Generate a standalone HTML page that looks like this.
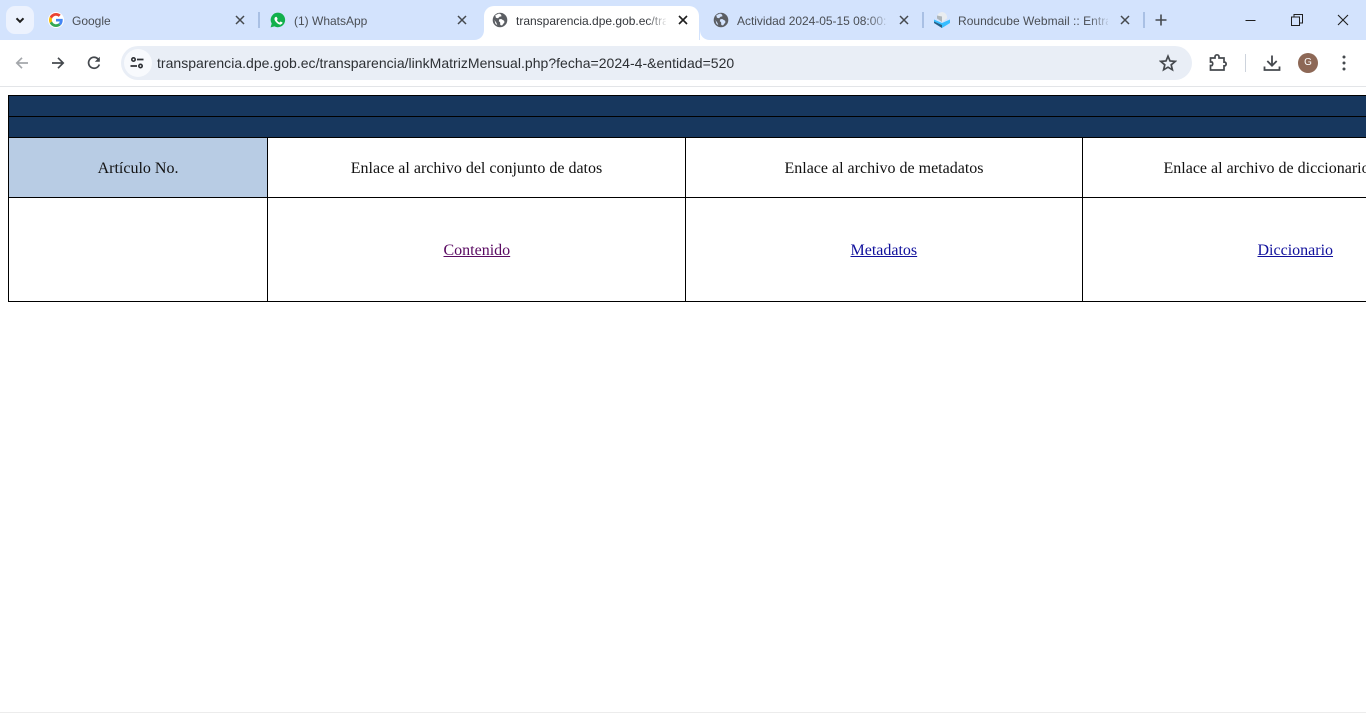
<!DOCTYPE html>
<html lang="es">
<head>
<meta charset="utf-8">
<title>transparencia.dpe.gob.ec</title>
<style>
html,body{margin:0;padding:0;width:1366px;height:713px;overflow:hidden;background:#fff}
#r{position:relative;width:1366px;height:713px;overflow:hidden}
#r div,#r svg,#r a,#r span{position:absolute}
.tt{font:12px/16px "Liberation Sans",sans-serif;color:#4a4e54;top:12.500px;white-space:nowrap;overflow:hidden;letter-spacing:0}
.x{width:10px;height:10px}
.sep{width:2px;height:16px;top:12px;background:#a9c0e4}
.ln{background:#000}
.c{font:16px/18px "Liberation Serif",serif;color:#111;text-align:center;white-space:nowrap}
.fade{width:22px;height:18px;top:11px}
</style>
</head>
<body>
<div id="r">
<div style="left:0;top:0;width:1366px;height:40px;background:#d3e3fd"></div>

<div style="left:6px;top:6px;width:28px;height:28px;border-radius:9px;background:#ecf2fe"></div>
<svg style="left:15px;top:17px" width="10" height="7" viewBox="0 0 10 7"><path d="M1.500 1.300 5 4.800 8.500 1.300" fill="none" stroke="#1f1f1f" stroke-width="2"/></svg>

<div style="left:48px;top:12px;width:16px;height:16px;border-radius:8px;background:#fff"></div>
<svg style="left:49px;top:13px" width="14" height="14" viewBox="0 0 48 48"><path fill="#EA4335" d="M24 9.500c3.500 0 6.700 1.200 9.200 3.600l6.900-6.900C35.900 2.400 30.500 0 24 0 14.600 0 6.500 5.400 2.600 13.200l8 6.200C12.400 13.700 17.700 9.500 24 9.500z"/><path fill="#4285F4" d="M47 24.500c0-1.600-.1-3.100-.4-4.500H24v9h12.900c-.6 3-2.200 5.500-4.700 7.200l7.700 6C44.400 38.400 47 32 47 24.500z"/><path fill="#FBBC05" d="M10.600 28.600c-.5-1.400-.8-3-.8-4.600s.3-3.200.8-4.600l-8-6.200C.9 16.500 0 20.100 0 24s.9 7.500 2.600 10.800l8-6.200z"/><path fill="#34A853" d="M24 48c6.500 0 11.900-2.100 15.900-5.800l-7.700-6c-2.200 1.500-4.900 2.300-8.200 2.300-6.300 0-11.600-4.200-13.400-9.900l-8 6.200C6.500 42.600 14.600 48 24 48z"/></svg>
<div class="tt" style="left:72px;width:150px">Google</div>
<svg class="x" style="left:235px;top:15px" viewBox="0 0 10 10"><path d="M1 1 9 9M9 1 1 9" stroke="#45494e" stroke-width="1.500"/></svg>
<div class="sep" style="left:258px"></div>

<svg style="left:270px;top:12px" width="16" height="16" viewBox="0 0 16 16"><path fill="#12b04c" d="M8 .6a7.300 7.300 0 0 0-6.300 11L.6 15.400l3.900-1A7.300 7.300 0 1 0 8 .6z"/><path fill="#fff" d="M5.600 4.200c-.3 0-.7.100-1 .5-.4.400-.9 1-.9 2.200s.9 2.500 1.100 2.700c.1.200 1.800 2.900 4.400 3.800 2.100.8 2.600.6 3-.1.500-.1 1.300-.6 1.400-1.100.2-.5.200-1 .1-1.100l-.4-.2-1.600-.8c-.2-.1-.4-.1-.6.100l-.7.9c-.1.200-.3.200-.5.100-.3-.1-1-.4-1.800-1.100-.7-.6-1.100-1.300-1.300-1.600-.1-.2 0-.3.100-.5l.5-.6.200-.4v-.4L6.800 5c-.2-.5-.4-.8-.6-.8z" transform="translate(1.500 1.500) scale(.8)"/></svg>
<div class="tt" style="left:294px;width:150px">(1) WhatsApp</div>
<svg class="x" style="left:457px;top:15px" viewBox="0 0 10 10"><path d="M1 1 9 9M9 1 1 9" stroke="#45494e" stroke-width="1.500"/></svg>

<svg style="left:474px;top:30px" width="236" height="10" viewBox="0 0 236 10"><path d="M0 10C6 10 10 6 10 0V10zM236 10C230 10 226 6 226 0V10z" fill="#fff"/></svg>
<div style="left:484px;top:6px;width:215px;height:34px;background:#fff;border-radius:10px 10px 0 0"></div>
<svg style="left:492px;top:12px" width="16" height="16" viewBox="0 0 16 16"><circle cx="8" cy="8" r="7.300" fill="#5b5e63"/><path fill="#fff" d="M7 1.500 3.300 3.200l.6 2.600L6 6.300l1.500-1.600 2-.5L9 2.500zM9.200 7l-1.900.3-.5 1.800 1.300 1.300.2 2.600 1.700.5 2.500-3.200-.4-1.500zM2.500 8l2 3 .8 2.200-1.900-1.500z"/></svg>
<div class="tt" style="left:516px;width:150px;color:#33363b">transparencia.dpe.gob.ec/transparencia</div>
<div class="fade" style="left:646px;background:linear-gradient(90deg,rgba(255,255,255,0),#fff)"></div>
<svg class="x" style="left:678px;top:15px" viewBox="0 0 10 10"><path d="M1 1 9 9M9 1 1 9" stroke="#1f1f1f" stroke-width="1.600"/></svg>

<svg style="left:713px;top:12px" width="16" height="16" viewBox="0 0 16 16"><circle cx="8" cy="8" r="7.300" fill="#5b5e63"/><path fill="#d3e3fd" d="M7 1.500 3.300 3.200l.6 2.600L6 6.300l1.500-1.600 2-.5L9 2.500zM9.200 7l-1.900.3-.5 1.800 1.300 1.300.2 2.600 1.700.5 2.500-3.200-.4-1.500zM2.500 8l2 3 .8 2.200-1.900-1.500z"/></svg>
<div class="tt" style="left:737px;width:150px;letter-spacing:-.03px">Actividad 2024-05-15 08:00:53</div>
<div class="fade" style="left:868px;background:linear-gradient(90deg,rgba(211,227,253,0),#d3e3fd)"></div>
<svg class="x" style="left:899px;top:15px" viewBox="0 0 10 10"><path d="M1 1 9 9M9 1 1 9" stroke="#45494e" stroke-width="1.500"/></svg>
<div class="sep" style="left:922px"></div>

<svg style="left:934px;top:12px" width="16" height="16" viewBox="0 0 16 16"><path fill="#37beff" d="M0 7.500 8 11l8-3.500V11l-8 5-8-5z"/><path fill="#2b5f85" d="M0 9.500 8 13v3l-8-5z"/><path fill="#e9edf0" d="M8 0a5.500 5.500 0 0 1 5 6.500L8 10 3 6.500A5.500 5.500 0 0 1 8 0z"/><path fill="#aeb6bb" d="M8 10V4.500L3 3.500 3 6.500z"/></svg>
<div class="tt" style="left:958px;width:150px;letter-spacing:.03px">Roundcube Webmail :: Entrar</div>
<div class="fade" style="left:1089px;background:linear-gradient(90deg,rgba(211,227,253,0),#d3e3fd)"></div>
<svg class="x" style="left:1120px;top:15px" viewBox="0 0 10 10"><path d="M1 1 9 9M9 1 1 9" stroke="#45494e" stroke-width="1.500"/></svg>
<div class="sep" style="left:1143px"></div>
<svg style="left:1155px;top:14px" width="12" height="12" viewBox="0 0 12 12"><path d="M6 .5v11M.5 6h11" stroke="#45494e" stroke-width="1.600"/></svg>

<svg style="left:1245px;top:15px" width="11" height="10" viewBox="0 0 11 10"><path d="M.5 5.500h10" stroke="#1f1f1f"/></svg>
<svg style="left:1291px;top:14px" width="12" height="12" viewBox="0 0 12 12"><path d="M.5 3h8v8.500h-8zM3 3V.5h8.500V9H8.500" fill="none" stroke="#1f1f1f"/></svg>
<svg style="left:1337px;top:14px" width="12" height="12" viewBox="0 0 12 12"><path d="M1 1 11 11M11 1 1 11" stroke="#1f1f1f" stroke-width="1.100"/></svg>

<div style="left:0;top:40px;width:1366px;height:46px;background:#fff;border-radius:10px 10px 0 0"></div>
<div style="left:484px;top:36px;width:215px;height:6px;background:#fff"></div>
<div style="left:0;top:86px;width:1366px;height:1px;background:#e3e5e8"></div>

<svg style="left:14px;top:55px" width="16" height="16" viewBox="0 0 16 16"><path d="M14 8H3M8 2.800 2.800 8 8 13.200" fill="none" stroke="#a4a7ab" stroke-width="1.700"/></svg>
<svg style="left:50px;top:55px" width="16" height="16" viewBox="0 0 16 16"><path d="M2 8h11M8 2.800 13.200 8 8 13.200" fill="none" stroke="#45494e" stroke-width="1.700"/></svg>
<svg style="left:86px;top:55px" width="16" height="16" viewBox="0 0 16 16"><path d="M13.300 9.500A5.500 5.500 0 1 1 12 3.900L13.400 5.300" fill="none" stroke="#45494e" stroke-width="1.700"/><path d="M13.800 1.800v5h-5z" fill="#45494e"/></svg>

<div style="left:121px;top:46px;width:1071px;height:34px;border-radius:17px;background:#e9eef6"></div>
<div style="left:124px;top:49px;width:28px;height:28px;border-radius:14px;background:#f8fafd"></div>
<svg style="left:130px;top:56px" width="14" height="14" viewBox="0 0 14 14"><circle cx="3.500" cy="3.500" r="1.700" fill="none" stroke="#2f3236" stroke-width="1.600"/><path d="M7 3.500h6.500M.5 10H7" stroke="#2f3236" stroke-width="1.800"/><circle cx="10.500" cy="10" r="1.700" fill="none" stroke="#2f3236" stroke-width="1.600"/></svg>
<div style="left:157px;top:54px;font:14px/18px 'Liberation Sans',sans-serif;color:#2d3034;white-space:nowrap;letter-spacing:.024px">transparencia.dpe.gob.ec/transparencia/linkMatrizMensual.php?fecha=2024-4-&amp;entidad=520</div>
<svg style="left:1159px;top:54px" width="18" height="18" viewBox="0 0 18 18"><path d="M9 2.200 11 7l5.200.4-4 3.400 1.200 5L9 13.200 4.600 15.800l1.200-5-4-3.400L7 7z" fill="none" stroke="#45494e" stroke-width="1.700" stroke-linejoin="miter"/></svg>

<svg style="left:1209px;top:53px" width="19" height="19" viewBox="0 0 19 19"><path d="M1.500 5H6V3.800a2 2 0 0 1 4 0V5h5v4.200h1a2 2 0 0 1 0 3.600h-1V17H1.500v-4.500H3a2.500 2.500 0 0 0 0-3.500H1.500z" fill="none" stroke="#45494e" stroke-width="1.700"/></svg>
<div style="left:1245px;top:54px;width:1px;height:18px;background:#cdd3dc"></div>
<svg style="left:1263px;top:54px" width="18" height="18" viewBox="0 0 18 18"><path d="M9 1.500v10M4.300 7 9 11.700 13.700 7M1.500 12.500v3.500h15v-3.500" fill="none" stroke="#45494e" stroke-width="1.800"/></svg>
<div style="left:1298px;top:53px;width:20px;height:20px;border-radius:10px;background:#8d6856;color:#fff;font:10px/20px 'Liberation Sans',sans-serif;text-align:center">G</div>
<svg style="left:1342px;top:55px" width="4" height="16" viewBox="0 0 4 16"><circle cx="2" cy="2" r="1.500" fill="#45494e"/><circle cx="2" cy="8" r="1.500" fill="#45494e"/><circle cx="2" cy="14" r="1.500" fill="#45494e"/></svg>

<div style="left:8px;top:95px;width:1358px;height:43px;background:#17375e"></div>
<div style="left:9px;top:138px;width:258px;height:59px;background:#b8cce4"></div>

<div class="ln" style="left:8px;top:95px;width:1358px;height:1px"></div>
<div class="ln" style="left:8px;top:116px;width:1358px;height:1px"></div>
<div class="ln" style="left:8px;top:137px;width:1358px;height:1px"></div>
<div class="ln" style="left:8px;top:197px;width:1358px;height:1px"></div>
<div class="ln" style="left:8px;top:301px;width:1358px;height:1px"></div>
<div class="ln" style="left:8px;top:95px;width:1px;height:207px"></div>
<div class="ln" style="left:267px;top:137px;width:1px;height:165px"></div>
<div class="ln" style="left:685px;top:137px;width:1px;height:165px"></div>
<div class="ln" style="left:1082px;top:137px;width:1px;height:165px"></div>

<div class="c" style="left:9px;width:258px;top:160px">Artículo No.</div>
<div class="c" style="left:268px;width:417px;top:160px">Enlace al archivo del conjunto de datos</div>
<div class="c" style="left:686px;width:396px;top:160px">Enlace al archivo de metadatos</div>
<div class="c" style="left:1163.500px;top:160px">Enlace al archivo de diccionario</div>
<a class="c" href="#" style="left:443.500px;top:242px;color:#5a0a62">Contenido</a>
<a class="c" href="#" style="left:850.500px;top:242px;color:#10109c">Metadatos</a>
<a class="c" href="#" style="left:1257.500px;top:242px;color:#10109c">Diccionario</a>

<div style="left:0;top:712px;width:1366px;height:1px;background:#ececec"></div>
</div>
</body>
</html>
